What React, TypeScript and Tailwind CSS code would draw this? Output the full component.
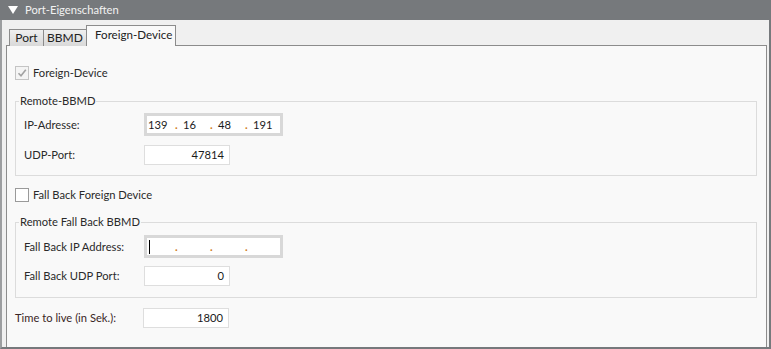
import React from "react";

const font = { fontFamily: "Lato, 'Liberation Sans', sans-serif" };

function Check({ checked }: { checked?: boolean }) {
  return (
    <div
      className={
        "w-[14px] h-[14px] border flex items-center justify-center " +
        (checked ? "border-[#c4c4c4] bg-[#f4f4f4]" : "border-[#9a9a9a] bg-white")
      }
    >
      {checked && (
        <svg width="10" height="10" viewBox="0 0 10 10">
          <path d="M1.5 5.2 L4 7.8 L8.8 1.8" fill="none" stroke="#a2a2a2" strokeWidth="1.6" />
        </svg>
      )}
    </div>
  );
}

function IpField({ parts, caret }: { parts: string[]; caret?: boolean }) {
  return (
    <div className="w-[139px] h-[23px] border-[3px] border-[#d8d8d8] bg-white flex items-center pl-[1px]">
      {parts.map((p, i) => (
        <React.Fragment key={i}>
          <div className="w-[27px] shrink-0 h-full flex items-center text-[#1a1a1a]">
            {i === 0 && caret && <span className="w-[1px] h-[14px] bg-black ml-[1px]" />}
            {p}
          </div>
          {i < 3 && <div className="w-[8px] shrink-0 text-[#d07a14] font-bold">.</div>}
        </React.Fragment>
      ))}
    </div>
  );
}

function NumField({ value }: { value: string }) {
  return (
    <div className="w-[86px] h-[20px] border border-[#dedede] bg-white flex items-center justify-end pr-[5px] text-[#1a1a1a]">
      {value}
    </div>
  );
}

function Row({ label, children }: { label: string; children: React.ReactNode }) {
  return (
    <div className="flex items-center">
      <div className="w-[128px] pl-[8px] text-[#2a2a2a]">{label}</div>
      {children}
    </div>
  );
}

export default function App() {
  return (
    <div
      className="w-[771px] h-[349px] bg-[#f0f0f0] flex flex-col text-[11.2px] leading-[16px]"
      style={font}
    >
      {/* Header */}
      <div className="h-[20px] bg-[#76797c] flex items-center text-[#f2f2f2] text-[11.2px] shrink-0">
        <div className="w-[25px] pl-[8px]">
          <svg width="10" height="8" viewBox="0 0 10 8">
            <path d="M0 0 H10 L5 8 Z" fill="#ffffff" />
          </svg>
        </div>
        <span>Port-Eigenschaften</span>
      </div>

      <div className="flex-1 flex flex-col border-l-2 border-r-2 border-b-2 border-l-[#9c9ea0] border-r-[#76797c] border-b-[#76797c] pl-[4px] pr-[2px]">
        {/* Tabs */}
        <div className="h-[25px] flex items-end shrink-0 pl-[3px] relative z-10">
          <div className="w-[35px] h-[17px] border border-b-0 border-[#8c8c8c] bg-gradient-to-b from-[#efefef] to-[#d9d9d9] flex items-center justify-center text-[#222] text-[12px] mb-[-1px] -mr-px">
            Port
          </div>
          <div className="w-[44px] h-[17px] border border-b-0 border-[#8c8c8c] bg-gradient-to-b from-[#efefef] to-[#d9d9d9] flex items-center justify-center text-[#222] text-[12px] mb-[-1px] -mr-px">
            BBMD
          </div>
          <div className="h-[21px] w-[90px] pl-[8px] border border-b-0 border-[#8c8c8c] bg-[#f9f9f9] flex items-start pt-[1px] text-[#222] text-[11.6px] mb-[-1px]">
            Foreign-Device
          </div>
        </div>

        {/* Panel */}
        <div className="flex-1 border border-b-0 border-[#8c8c8c] bg-[#f9f9f9] pl-[8px] pr-[9px] pt-[20px] flex flex-col">
          <div className="flex items-center gap-[4px] h-[14px] text-[#2a2a2a]">
            <Check checked />
            <span>Foreign-Device</span>
          </div>

          <fieldset className="mt-[13px] border border-[#dcdcdc] pb-[10px]">
            <legend className="ml-[3px] px-[1px] text-[#2a2a2a]">Remote-BBMD</legend>
            <div className="flex flex-col gap-[9px] pt-[4px]">
              <Row label="IP-Adresse:">
                <IpField parts={["139", "16", "48", "191"]} />
              </Row>
              <Row label="UDP-Port:">
                <NumField value="47814" />
              </Row>
            </div>
          </fieldset>

          <div className="mt-[12px] flex items-center gap-[4px] h-[14px] text-[#2a2a2a]">
            <Check />
            <span>Fall Back Foreign Device</span>
          </div>

          <fieldset className="mt-[12px] border border-[#dcdcdc] pb-[11px]">
            <legend className="ml-[3px] px-[1px] text-[#2a2a2a]">Remote Fall Back BBMD</legend>
            <div className="flex flex-col gap-[8px] pt-[5px]">
              <Row label="Fall Back IP Address:">
                <IpField parts={["", "", "", ""]} caret />
              </Row>
              <Row label="Fall Back UDP Port:">
                <NumField value="0" />
              </Row>
            </div>
          </fieldset>

          <div className="mt-[10px] flex items-center">
            <div className="w-[128px] text-[#3a2626]">Time to live (in Sek.):</div>
            <NumField value="1800" />
          </div>
        </div>
      </div>
    </div>
  );
}
